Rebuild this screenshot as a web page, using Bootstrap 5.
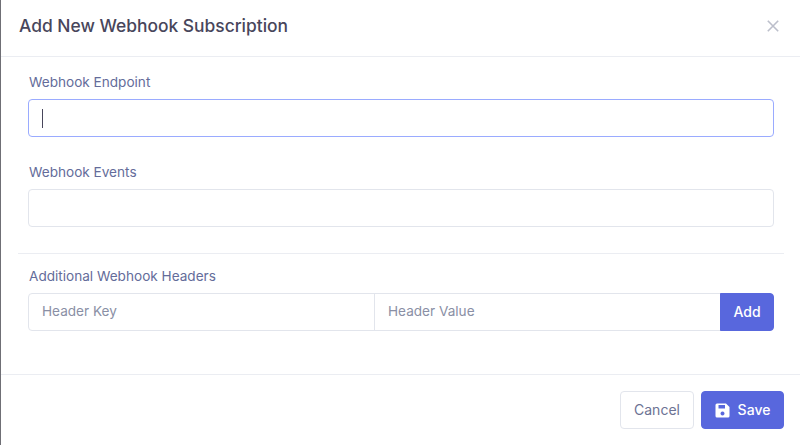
<!DOCTYPE html>
<html lang="en"><head><meta charset="utf-8"><title>Add New Webhook Subscription</title>
<link href="https://cdn.jsdelivr.net/npm/bootstrap@5.3.0/dist/css/bootstrap.min.css" rel="stylesheet">
<style>
html,body{height:445px;overflow:hidden;background:#fff}
body{font-family:Inter,"Liberation Sans",sans-serif;font-size:13.5px;color:#646c9a}
.sheet{height:445px;border-left:1px solid #6f6f75;display:flex;flex-direction:column}
.sheet-head{height:57px;border-bottom:1px solid #ebedf2;padding:0 21px 4px 18px}
.sheet-title{font-size:17.4px;font-weight:500;color:#48465b;margin:0}
.sheet-body{height:318px;padding:15px 16px 0 17px;border-bottom:1px solid #ebedf2}
.sheet-foot{flex:1;padding:0 16px 0 0;gap:7px}
.field-label{font-size:13.6px;color:#646c9a;margin:0 0 7px 11px;line-height:20px}
.entry{height:38px;border:1px solid #e2e5ec;border-radius:4px;font-size:13.6px;padding:0 13px 2px;color:#495057}
.entry::placeholder{color:#8a8fa5}
.focused{border-color:#9aabff}
.entry-wrap{margin:0 10px 0 10px}
.spaced{margin-top:25px}
.rule{border-top:1px solid #ebedf2;margin:26px 0 12px;opacity:1}
.btn-add{background:#5867dd;border:1px solid #5867dd;color:#fff;font-size:14px;font-weight:500;width:54px;padding:0 0 2px;border-radius:0 4px 4px 0}
.btn-cancel{height:38px;width:74px;border:1px solid #e2e5ec;color:#6c7293;background:#fff;font-size:14px;padding:0 0 2px;border-radius:4px}
.btn-save{height:38px;width:83px;background:#5867dd;border:1px solid #5867dd;color:#fff;font-size:14px;font-weight:500;padding:0;border-radius:4px;gap:8px}
.save-text{margin-bottom:2px}
.caret-mark{width:1px;height:19px;background:#48465b;position:absolute;left:14px;top:10px}
</style></head><body>
<div class="sheet">
  <div class="sheet-head d-flex align-items-center justify-content-between">
    <h5 class="sheet-title">Add New Webhook Subscription</h5>
    <svg width="12" height="12" viewBox="0 0 12 12" aria-label="Close"><path d="M.8.8l10.4 10.4M11.2.8L.8 11.2" stroke="#bcbfcb" stroke-width="1.6" fill="none"/></svg>
  </div>
  <div class="sheet-body">
    <label class="field-label d-block">Webhook Endpoint</label>
    <div class="entry-wrap position-relative"><input class="form-control entry focused" type="text"><span class="caret-mark"></span></div>
    <div class="spaced">
      <label class="field-label d-block">Webhook Events</label>
      <div class="entry-wrap"><input class="form-control entry" type="text"></div>
    </div>
    <hr class="rule">
    <label class="field-label d-block">Additional Webhook Headers</label>
    <div class="entry-wrap">
      <div class="input-group">
        <input class="form-control entry" placeholder="Header Key">
        <input class="form-control entry" placeholder="Header Value">
        <button class="btn btn-add" type="button">Add</button>
      </div>
    </div>
  </div>
  <div class="sheet-foot d-flex align-items-center justify-content-end">
    <button class="btn btn-cancel" type="button">Cancel</button>
    <button class="btn btn-save d-flex align-items-center justify-content-center" type="button">
      <svg width="15" height="15" viewBox="0 0 15 15"><path fill="#fff" fill-rule="evenodd" d="M1.5 0.5H11L14.5 4V13a1.5 1.5 0 0 1-1.5 1.5H2A1.5 1.5 0 0 1 .5 13V2A1.5 1.5 0 0 1 2 .5zM3.5 2V5.5H10V2zM7.5 8.5a2 2 0 1 0 .01 0z"/></svg><span class="save-text">Save</span></button>
  </div>
</div>
</body></html>
